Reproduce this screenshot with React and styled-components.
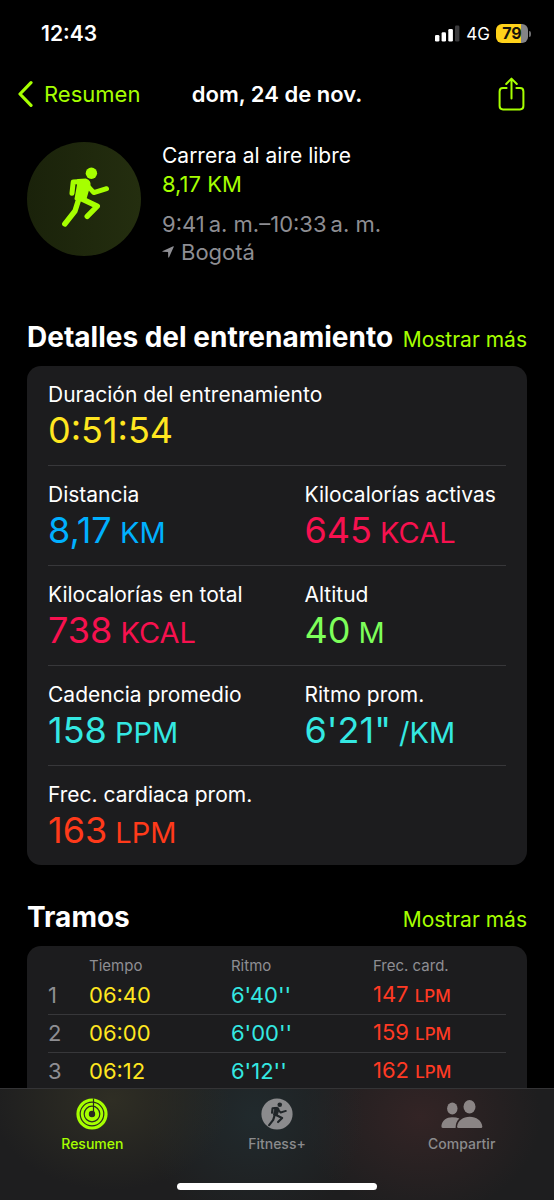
import React from "react";
import styled, { createGlobalStyle, css } from "styled-components";

const lime = "#a6ff00";

const GlobalStyle = createGlobalStyle`
  * { box-sizing: border-box; }
  body {
    margin: 0;
    background: #000;
    color: #fff;
    font-family: Inter, "Noto Sans", sans-serif;
    font-size: 22px;
    line-height: 28px;
  }
  h1, h2, p, dl, dd { margin: 0; }
  a { color: inherit; text-decoration: none; }
  button { padding: 0; border: 0; background: none; color: inherit; font: inherit; cursor: pointer; }
  svg { display: block; }
`;

const Screen = styled.div`
  display: flex;
  flex-direction: column;
  height: 100vh;
`;

const StatusBar = styled.header`
  flex: none;
  display: flex;
  align-items: center;
  justify-content: space-between;
  height: 67px;
  padding: 0 23px 0 41px;
`;

const Clock = styled.time`
  font-size: 21px;
  font-weight: 600;
`;

const StatusIcons = styled.div`
  display: flex;
  align-items: center;
  gap: 6px;
  font-size: 17px;
`;

const Battery = styled.div`
  display: flex;
  align-items: center;
  gap: 1px;

  &::after {
    content: "";
    width: 2px;
    height: 6px;
    border-radius: 0 2px 2px 0;
    background: #6d6d70;
  }
`;

const BatteryLevel = styled.span`
  width: 32px;
  height: 19px;
  border-radius: 6px;
  background: linear-gradient(to right, #ffd21a 79%, #848487 79%);
  color: #15130a;
  font-size: 16px;
  font-weight: 700;
  line-height: 19px;
  text-align: center;
`;

const NavBar = styled.nav`
  flex: none;
  display: grid;
  grid-template-columns: 1fr auto 1fr;
  align-items: center;
  height: 54px;
  padding: 0 18px;
`;

const BackLink = styled.a`
  display: flex;
  align-items: center;
  gap: 11px;
  color: ${lime};
`;

const NavTitle = styled.h1`
  font-size: 22px;
  font-weight: 600;
`;

const ShareButton = styled.button`
  justify-self: end;
  margin-right: 11px;
  color: ${lime};
`;

const Content = styled.main`
  flex: 1;
  min-height: 0;
  overflow-y: auto;
  scrollbar-width: none;
  padding: 21px 27px 0;
`;

const Summary = styled.section`
  display: flex;
  gap: 21px;
`;

const ActivityBadge = styled.div`
  display: grid;
  place-items: center;
  width: 114px;
  height: 114px;
  border-radius: 50%;
  background: linear-gradient(to right, #1a220a, #242e0f);
  color: ${lime};
`;

const SummaryLine = styled.p`
  color: ${({ $color }) => $color || "#fff"};
  display: flex;
  align-items: center;
  gap: 7px;
`;

const ActivityName = styled.p`
  font-size: 21px;
`;

const SummaryGroup = styled.div`
  & + & { margin-top: 12px; }
`;

const SectionHeader = styled.div`
  display: flex;
  align-items: baseline;
  justify-content: space-between;
  margin: ${({ $first }) => ($first ? "54px" : "35px")} 0 12px;
  white-space: nowrap;
`;

const SectionTitle = styled.h2`
  font-size: 28px;
  font-weight: 700;
  line-height: 34px;
`;

const MoreLink = styled.a`
  color: ${lime};
  font-size: 21px;
`;

const Card = styled.div`
  padding: ${({ $table }) => ($table ? "10px 21px 24px" : "0 21px")};
  border-radius: 14px;
  background: #1c1c1e;
`;

const MetricRow = styled.dl`
  display: grid;
  grid-template-columns: 56% 44%;
  padding: 15px 0 14px;
  white-space: nowrap;

  & + & { border-top: 1px solid #37373a; }
`;

const MetricLabel = styled.dt`
  font-size: 21px;
`;

const MetricValue = styled.dd`
  color: ${({ $color }) => $color};
  font-size: 36px;
  line-height: 42px;
`;

const MetricUnit = styled.span`
  font-size: 29px;
  line-height: 29px;
`;

const SplitTable = styled.table`
  width: 100%;
  table-layout: fixed;
  border-collapse: collapse;
  text-align: left;
`;

const HeadCell = styled.th`
  width: ${({ $width }) => $width || "auto"};
  height: 20px;
  padding: 0;
  color: #8e8e93;
  font-size: 15px;
  font-weight: 400;
  line-height: 20px;
`;

const SplitRow = styled.tr`
  & + & { border-top: 1px solid #37373a; }
`;

const splitCell = css`
  height: 38px;
  padding: 0;
  color: ${({ $color }) => $color};
  font-weight: 400;
`;

const SplitIndex = styled.th`${splitCell}`;
const SplitCell = styled.td`${splitCell}`;

const SplitUnit = styled.span`
  font-size: 17px;
  font-weight: 500;
`;

const TabBar = styled.nav`
  flex: none;
  height: 112px;
  border-top: 1px solid #343436;
  background:
    radial-gradient(120px 90px at 20% 10%, #2f2e24, transparent),
    radial-gradient(110px 110px at 46% 25%, #212a2d, transparent),
    radial-gradient(120px 100px at 76% 25%, #332425, transparent),
    #1e1e1f;
`;

const TabList = styled.div`
  display: grid;
  grid-template-columns: repeat(3, 1fr);
  height: 94px;
`;

const Tab = styled.a`
  display: flex;
  flex-direction: column;
  align-items: center;
  gap: 4px;
  padding-top: 9px;
  color: ${({ $active }) => ($active ? lime : "#8b8b8d")};
  font-size: 14px;
  font-weight: 500;
  line-height: 20px;
`;

const HomeIndicator = styled.div`
  width: 36%;
  height: 7px;
  margin: 0 auto;
  border-radius: 4px;
  background: #fff;
`;

function RunnerShape() {
  return (
    <g stroke="currentColor" strokeLinecap="round" strokeLinejoin="round" fill="none">
      <circle cx="41.4" cy="18.2" r="5.7" fill="currentColor" stroke="none" />
      <path d="M22 38.2 L23.2 27 L33 26.4" strokeWidth="5" />
      <path d="M35.5 28.5 L43.8 37.6 L56.6 33.6" strokeWidth="4.8" />
      <path d="M28 25 L36 24.6 Q40 26 39.5 30 L35 45.5 L25.5 44 L28 30 Z" fill="currentColor" strokeWidth="2" />
      <path d="M28.8 44 L25 56 L14.8 69" strokeWidth="5.4" />
      <path d="M32 44 L47.3 51.2 L37.2 61.4" strokeWidth="5.4" />
    </g>
  );
}

const RunnerIcon = () => (
  <svg width="70" height="86" viewBox="-1 1 70 86" aria-hidden="true"><RunnerShape /></svg>
);

const SignalIcon = () => (
  <svg width="25" height="17" viewBox="0 0 25 17" fill="#fff" aria-hidden="true">
    <rect x="0" y="10" width="4.4" height="6.5" rx="1.3" />
    <rect x="6.6" y="7.3" width="4.4" height="9.2" rx="1.3" />
    <rect x="13.3" y="4" width="4.6" height="12.5" rx="1.3" />
    <rect x="20" y="0.5" width="4.4" height="16" rx="1.3" fill="#3a3a3c" />
  </svg>
);

const BackIcon = () => (
  <svg width="15" height="28" viewBox="0 0 15 28" fill="none" stroke="currentColor" strokeWidth="3.2" strokeLinecap="round" strokeLinejoin="round" aria-hidden="true">
    <path d="M13 2.6 L2 14 L13 25.4" />
  </svg>
);

const ShareIcon = () => (
  <svg width="27" height="34" viewBox="0 0 27 34" fill="none" stroke="currentColor" strokeWidth="2" strokeLinecap="round" strokeLinejoin="round" aria-hidden="true">
    <path d="M8.6 11 H5 Q1.6 11 1.6 14.4 V29 Q1.6 32.4 5 32.4 H22 Q25.4 32.4 25.4 29 V14.4 Q25.4 11 22 11 H18.4" />
    <path d="M13.5 21.4 V2 M8.2 7 L13.5 1.6 L18.8 7" />
  </svg>
);

const LocationIcon = () => (
  <svg width="12" height="12" viewBox="0 0 12 12" fill="currentColor" aria-hidden="true">
    <path d="M11.2 0.3 Q12 0.1 11.7 0.9 L7.1 11.2 Q6.5 12.2 6.2 11.1 L6.1 6.2 Q6.1 5.9 5.8 5.9 L1 5.8 Q-0.2 5.5 0.8 4.9 Z" />
  </svg>
);

const RingsIcon = () => (
  <svg width="32" height="32" viewBox="0 0 32 32" aria-hidden="true">
    <circle cx="16" cy="16" r="15.6" fill="currentColor" />
    <g fill="none" stroke="#2a2b20" strokeWidth="1.2">
      <circle cx="16" cy="16" r="11.8" />
      <circle cx="16" cy="16" r="7.8" />
      <circle cx="16" cy="16" r="2.6" fill="#2a2b20" />
      <path d="M17.5 0.5 V14" />
    </g>
  </svg>
);

const FitnessIcon = () => (
  <svg width="32" height="32" viewBox="0 0 32 32" color="#202528" aria-hidden="true">
    <circle cx="16" cy="16" r="15.6" fill="#8b8b8d" />
    <g transform="translate(2.2 -0.5) scale(0.4)"><RunnerShape /></g>
  </svg>
);

const PeopleIcon = () => (
  <svg width="42" height="32" viewBox="0 0 42 32" fill="#8b8585" aria-hidden="true">
    <ellipse cx="11.3" cy="10.6" rx="5.2" ry="6" />
    <path d="M14.6 30 H1.8 Q0.2 30 0.4 28 C1 22.5 5.6 19.2 11 19.2 Q15.5 19.2 18.4 20.6 Q14.6 24 14.6 30 Z" />
    <ellipse cx="28.5" cy="8.8" rx="6" ry="6.8" />
    <path d="M17.4 30 Q16 30 16.1 28.4 C16.8 22.8 22 18.8 28.7 18.8 C35.4 18.8 40.6 22.8 41.3 28.4 Q41.4 30 40 30 Z" />
  </svg>
);

const metrics = [
  [{ label: "Duración del entrenamiento", value: "0:51:54", color: "#ffe620" }],
  [
    { label: "Distancia", value: "8,17", unit: "KM", color: "#00b0ff" },
    { label: "Kilocalorías activas", value: "645", unit: "KCAL", color: "#f7114f" },
  ],
  [
    { label: "Kilocalorías en total", value: "738", unit: "KCAL", color: "#f7114f" },
    { label: "Altitud", value: "40", unit: "M", color: "#7dff5a" },
  ],
  [
    { label: "Cadencia promedio", value: "158", unit: "PPM", color: "#34e8e2" },
    { label: "Ritmo prom.", value: "6'21\"", unit: "/KM", color: "#34e8e2" },
  ],
  [{ label: "Frec. cardiaca prom.", value: "163", unit: "LPM", color: "#ff3a1a" }],
];

const splits = [
  { time: "06:40", pace: "6'40''", heart: 147 },
  { time: "06:00", pace: "6'00''", heart: 159 },
  { time: "06:12", pace: "6'12''", heart: 162 },
];

const tabs = [
  { label: "Resumen", Icon: RingsIcon, active: true },
  { label: "Fitness+", Icon: FitnessIcon },
  { label: "Compartir", Icon: PeopleIcon },
];

export default function App() {
  return (
    <Screen>
      <GlobalStyle />
      <StatusBar>
        <Clock>12:43</Clock>
        <StatusIcons>
          <SignalIcon />
          <span>4G</span>
          <Battery><BatteryLevel>79</BatteryLevel></Battery>
        </StatusIcons>
      </StatusBar>
      <NavBar>
        <BackLink href="#resumen"><BackIcon />Resumen</BackLink>
        <NavTitle>dom, 24 de nov.</NavTitle>
        <ShareButton type="button" aria-label="Compartir entrenamiento"><ShareIcon /></ShareButton>
      </NavBar>
      <Content>
        <Summary>
          <ActivityBadge><RunnerIcon /></ActivityBadge>
          <div>
            <SummaryGroup>
              <ActivityName>Carrera al aire libre</ActivityName>
              <SummaryLine $color={lime}>8,17 KM</SummaryLine>
            </SummaryGroup>
            <SummaryGroup>
              <SummaryLine $color="#8e8e93">{"9:41\u2009a. m.–10:33\u2009a. m."}</SummaryLine>
              <SummaryLine $color="#8e8e93"><LocationIcon />Bogotá</SummaryLine>
            </SummaryGroup>
          </div>
        </Summary>

        <SectionHeader $first>
          <SectionTitle>Detalles del entrenamiento</SectionTitle>
          <MoreLink href="#detalles">Mostrar más</MoreLink>
        </SectionHeader>
        <Card>
          {metrics.map((row) => (
            <MetricRow key={row[0].label}>
              {row.map(({ label, value, unit, color }) => (
                <div key={label}>
                  <MetricLabel>{label}</MetricLabel>
                  <MetricValue $color={color}>
                    {value}
                    {unit && <MetricUnit> {unit}</MetricUnit>}
                  </MetricValue>
                </div>
              ))}
            </MetricRow>
          ))}
        </Card>

        <SectionHeader>
          <SectionTitle>Tramos</SectionTitle>
          <MoreLink href="#tramos">Mostrar más</MoreLink>
        </SectionHeader>
        <Card $table>
          <SplitTable>
            <thead>
              <tr>
                <HeadCell $width="41px" aria-label="Tramo" />
                <HeadCell $width="31%">Tiempo</HeadCell>
                <HeadCell $width="31%">Ritmo</HeadCell>
                <HeadCell>Frec. card.</HeadCell>
              </tr>
            </thead>
            <tbody>
              {splits.map(({ time, pace, heart }, i) => (
                <SplitRow key={time}>
                  <SplitIndex scope="row" $color="#8e8e93">{i + 1}</SplitIndex>
                  <SplitCell $color="#ffe620">{time}</SplitCell>
                  <SplitCell $color="#34e8e2">{pace}</SplitCell>
                  <SplitCell $color="#ff3a24">{heart} <SplitUnit>LPM</SplitUnit></SplitCell>
                </SplitRow>
              ))}
            </tbody>
          </SplitTable>
        </Card>
      </Content>
      <TabBar>
        <TabList>
          {tabs.map(({ label, Icon, active }) => (
            <Tab key={label} href={"#" + label} $active={active}>
              <Icon />
              {label}
            </Tab>
          ))}
        </TabList>
        <HomeIndicator />
      </TabBar>
    </Screen>
  );
}
